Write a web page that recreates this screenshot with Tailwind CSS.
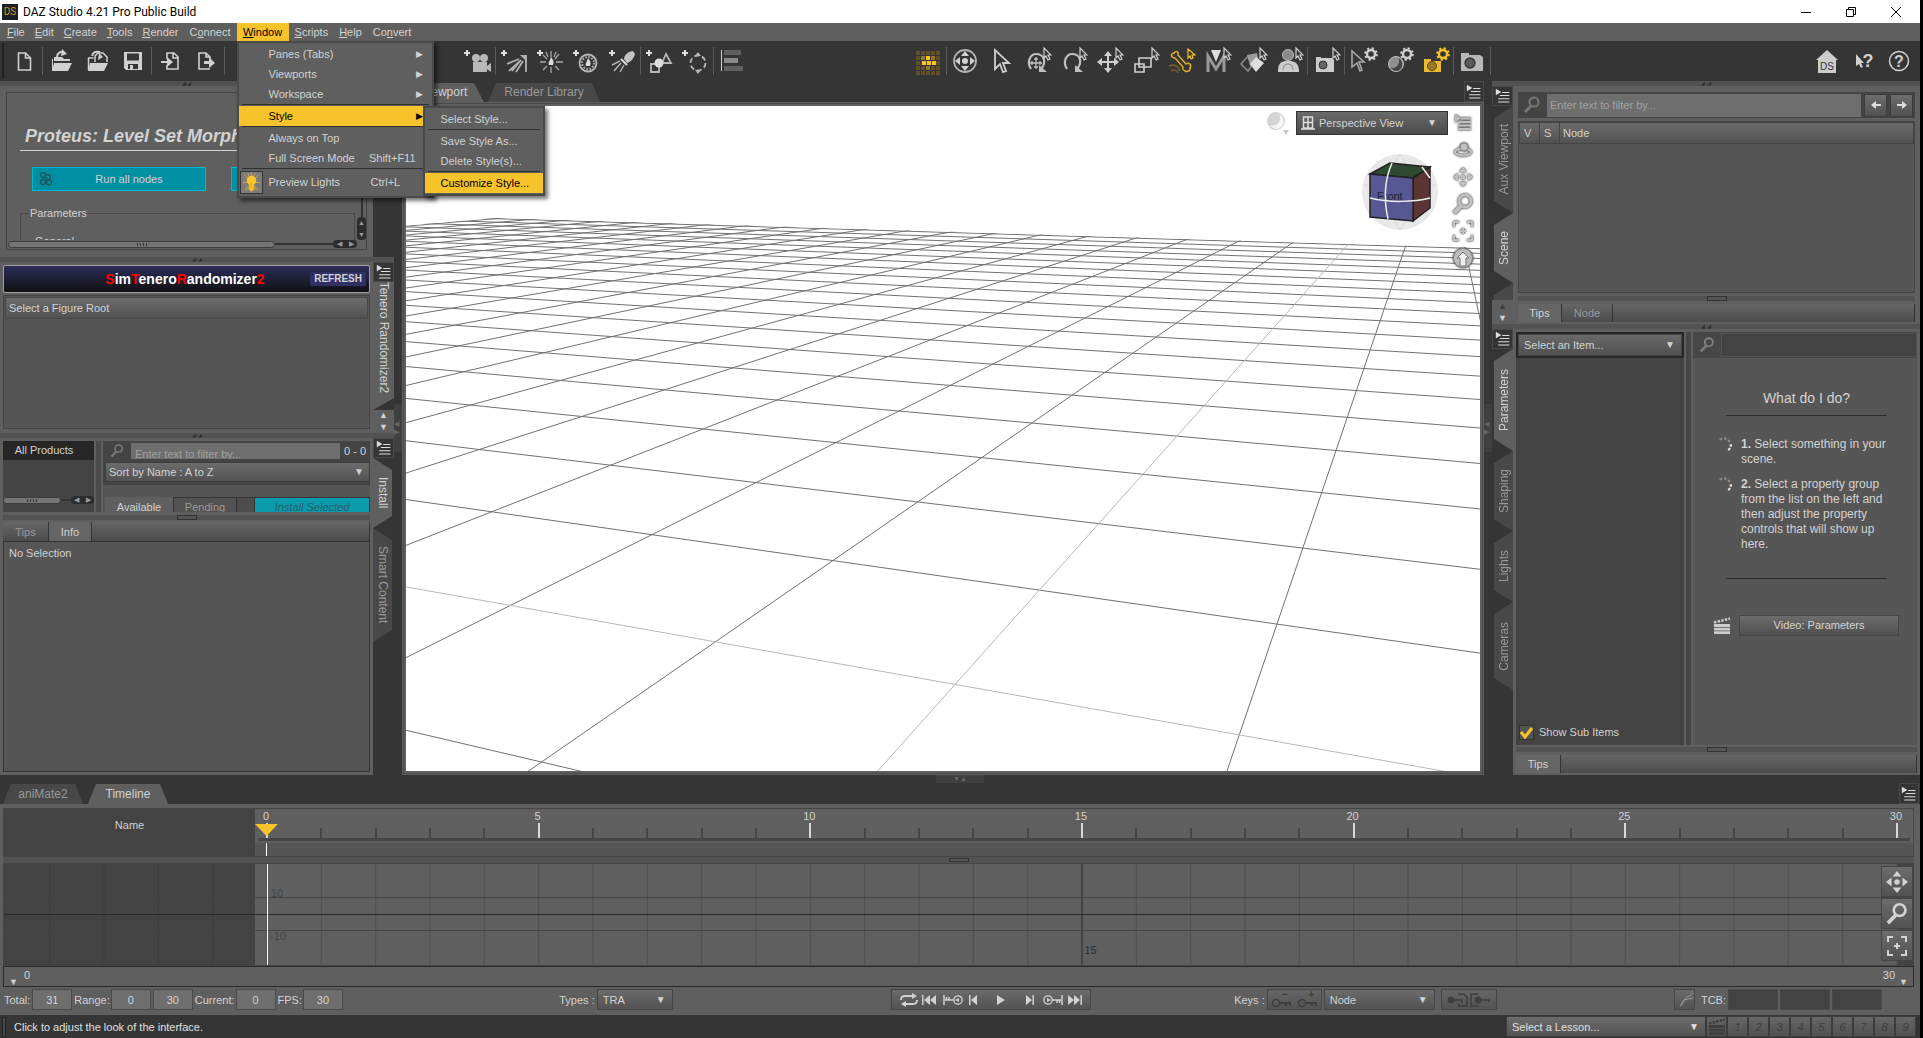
<!DOCTYPE html>
<html lang="en">
<head>
<meta charset="utf-8">
<title>DAZ Studio 4.21 Pro Public Build</title>
<script src="https://cdn.jsdelivr.net/npm/@tailwindcss/browser@4"></script>
</head>
<body class="bg-black pr-[3px] font-['Liberation_Sans',Arial,sans-serif] text-[11px] leading-4 text-[#d2d2d2]">

<!-- icon sprite -->
<svg class="hidden">
  <symbol id="cur" viewBox="0 0 30 30"><path d="M22 2v10l2-2 2 4 2-1-2-4h3z" fill="#343534" stroke="#d0d0d0" stroke-width="1.2"/></symbol>
  <symbol id="gear" viewBox="0 0 30 30"><circle cx="23" cy="8" r="4" fill="none" stroke="currentColor" stroke-width="2.4"/><circle cx="23" cy="8" r="5.8" fill="none" stroke="currentColor" stroke-width="2" stroke-dasharray="2.2 2.35"/></symbol>
  <symbol id="plus" viewBox="0 0 30 30"><path d="M2 7h6M5 4v6" stroke="#e0e0e0" stroke-width="2"/></symbol>
  <symbol id="new" viewBox="0 0 30 30"><path d="M9.500 7h7l5 5v12h-12zM16.500 7v5h5" fill="none" stroke="currentColor" stroke-width="1.6"/></symbol>
  <symbol id="open" viewBox="0 0 30 30"><path d="M6 15h18v-2h-6l-2-2H8v4zM8 17h18l-4 8H6z" fill="currentColor"/><path d="M6.500 24V13" stroke="currentColor"/><path d="M11 11c0-4 4-6 7-5" fill="none" stroke="currentColor" stroke-width="2"/><path d="M16 3l5 5-6 2z" fill="currentColor"/></symbol>
  <symbol id="recent" viewBox="0 0 30 30"><path d="M8 17h18l-4 8H6z" fill="currentColor"/><path d="M6.500 24V12h5M13 16v-6l3-3h5l4 4v5" fill="none" stroke="currentColor" stroke-width="1.500"/><path d="M10 10c1-4 4-5 8-4" fill="none" stroke="currentColor" stroke-width="2"/><path d="M17 7l4 4-5 3z" fill="currentColor"/></symbol>
  <symbol id="save" viewBox="0 0 30 30"><path fill-rule="evenodd" d="M6 6h18v18H8l-2-2zM9 7.500v7h12v-7zM10 18v5h10v-5z" fill="currentColor"/><path d="M12 19h3v4h-3z" fill="currentColor"/></symbol>
  <symbol id="import" viewBox="0 0 30 30"><path d="M12 13V7h7l4 4v12H12v-4M18 7v5h5" fill="none" stroke="currentColor" stroke-width="1.600"/><path d="M6 15h6v-4l6 5-6 5v-4H6z" fill="currentColor"/></symbol>
  <symbol id="export" viewBox="0 0 30 30"><path d="M18 22v1H8V7h7l4 4v3M15 7v4h4" fill="none" stroke="currentColor" stroke-width="1.600"/><path d="M13 15h5v-4l6 6-6 5v-4h-5z" fill="currentColor"/></symbol>
  <symbol id="video" viewBox="0 0 30 30"><g fill="#b8b8b8"><circle cx="14" cy="12" r="4"/><circle cx="22" cy="12" r="4"/><path d="M11 16h14v10H11zM25 20l4-3v9l-4-3z"/></g><use href="#plus"/></symbol>
  <symbol id="dlight" viewBox="0 0 30 30"><g stroke="#b0b0b0" stroke-width="1.800"><path d="M20 13L8 18M21 15L10 25M24 15l-7 11M27 14v12M22 14l-9 11"/></g><path d="M21 9h7v7z" fill="#b0b0b0"/><use href="#plus"/></symbol>
  <symbol id="plight" viewBox="0 0 30 30"><g stroke="#a8a8a8" stroke-width="1.300"><path d="M16 5v6M16 21v6M5 16h6M21 16h7M8 9l4 4M24 8l-4 5M8 24l4-4M24 24l-4-4M11 6l2 5M21 6l-2 5"/></g><path d="M16 11c3 4 3 5 2 8h-4c-1-3 1-4 2-8z" fill="#ddd"/><use href="#plus"/></symbol>
  <symbol id="llight" viewBox="0 0 30 30"><circle cx="17" cy="17" r="8.500" fill="none" stroke="#b8b8b8" stroke-width="1.800"/><circle cx="17" cy="17" r="6" fill="none" stroke="#b8b8b8" stroke-width="2" stroke-dasharray="1.500 1.600"/><path d="M17 12c3 4 3 5 2 8h-4c-1-3 1-4 2-8z" fill="#ddd"/><use href="#plus"/></symbol>
  <symbol id="slight" viewBox="0 0 30 30"><path d="M17 13c0-4 5-8 9-8l2 3c-1 4-4 8-8 9z" fill="#c4c4c4"/><path d="M14 13l6 6" stroke="#ddd" stroke-width="2"/><path d="M13 15l-8 4M14 17l-7 8M17 19l-4 7" stroke="#b0b0b0" stroke-width="1.500"/><use href="#plus"/></symbol>
  <symbol id="prim" viewBox="0 0 30 30"><path d="M7 18h8v8H7zM22 8l5 9h-9z" fill="#343534" stroke="#b8b8b8" stroke-width="1.800"/><circle cx="15" cy="17" r="4.500" fill="#ddd"/><use href="#plus"/></symbol>
  <symbol id="group" viewBox="0 0 30 30"><circle cx="18" cy="17" r="7.500" fill="none" stroke="#b8b8b8" stroke-width="1.800" stroke-dasharray="5 2.850"/><path d="M18 6l3 4h-6zM18 28l3-4h-6z" fill="#b8b8b8"/><use href="#plus"/></symbol>
  <symbol id="align" viewBox="0 0 30 30"><path d="M4.500 4v21" stroke="#d0d0d0"/><path d="M7 4h17v5H7zM7 20h19v5H7z" fill="#606060"/><path d="M7 12h14v5H7z" fill="#8a8a8a"/></symbol>
  <symbol id="wall" viewBox="0 0 30 30"><g fill="none" stroke="#5f5026" stroke-width="4" stroke-dasharray="4 1"><path d="M3 7h24M3 12h24M3 17h24M3 22h24M3 27h24"/></g><path d="M8 10h4v4H8zM18 10h4v4h-4zM13 20h4v4h-4z" fill="#947427"/><path d="M13 10h4v4h-4zM9 15h4v4H9zM14 15h4v4h-4zM19 15h4v4h-4z" fill="#f7c32b"/></symbol>
  <symbol id="aim" viewBox="0 0 30 30"><circle cx="15" cy="15" r="11" fill="none" stroke="#b0b0b0" stroke-width="1.800"/><path d="M15 5l4 5h-8zM15 25l4-5h-8zM5 15l5-4v8zM25 15l-5-4v8z" fill="#d0d0d0"/><circle cx="15" cy="15" r="3" fill="#d0d0d0"/></symbol>
  <symbol id="arrow" viewBox="0 0 30 30"><path d="M9 4v19l5-5 3 8 3-1-3-8h6z" fill="none" stroke="#d0d0d0" stroke-width="1.800"/></symbol>
  <symbol id="rot" viewBox="0 0 30 30"><path d="M9 23c-5-8 0-15 5-15 8 0 11 8 5 15" fill="none" stroke="#c0c0c0" stroke-width="2.200"/><path d="M17 19v7h8z" fill="#c0c0c0"/><use href="#cur"/></symbol>
  <symbol id="uni" viewBox="0 0 30 30"><use href="#rot"/><path d="M14 11v12M8 17h12M12 13h4M12 21h4M10 15v4M18 15v4" stroke="#c0c0c0" stroke-width="1.300"/></symbol>
  <symbol id="move" viewBox="0 0 30 30"><path d="M14 9v14M7 16h14" stroke="#d0d0d0" stroke-width="2"/><path d="M14 5l4 5h-8zM14 27l4-5h-8zM3 16l5-4v8zM25 16l-5-4v8z" fill="#d0d0d0"/><use href="#cur"/></symbol>
  <symbol id="scale" viewBox="0 0 30 30"><path d="M9 12h12v9H9zM5 18h9v8H5z" fill="none" stroke="#d0d0d0" stroke-width="1.600"/><use href="#cur"/></symbol>
  <symbol id="bone" viewBox="0 0 30 30"><path d="M8 7c2-3 5-1 4 2l8 9c3-2 6 1 4 4 1 3-3 4-5 3-2-1-3-3-2-4l-8-9c-4 0-5-4-1-5z" fill="none" stroke="#dda92a" stroke-width="1.500"/><path d="M3 20c5-2 9 0 11 5M5 25c3-2 6-1 7 2" fill="none" stroke="#7d6224" stroke-width="1.500"/><path d="M22 3v9l2-2 1 3 2-1-1-3h3z" fill="none" stroke="#f7c32b" stroke-width="1.200"/></symbol>
  <symbol id="morph" viewBox="0 0 30 30"><path d="M6 26V10l8 13 8-13v16" fill="none" stroke="#999" stroke-width="3"/><path d="M9 4h10l-5 12z" fill="#ddd"/><use href="#cur"/></symbol>
  <symbol id="surf" viewBox="0 0 30 30"><path d="M3 18l7-8 5 8-5 7z" fill="none" stroke="#888" stroke-width="1.500"/><path d="M9 9l10-2 2 10-9 3z" fill="#9a9a9a"/><path d="M18 11l8 6-8 9-6-8z" fill="#ddd"/><use href="#cur"/></symbol>
  <symbol id="fig" viewBox="0 0 30 30"><path d="M4 26c0-8 2-10 7-11h6c5 1 8 3 8 11z" fill="#ccc"/><circle cx="14" cy="9" r="5.500" fill="#8a8a8a" stroke="#bbb"/><path d="M9 24c0-8 10-8 10 0" fill="none" stroke="#999" stroke-width="1.500"/><use href="#cur"/></symbol>
  <symbol id="cam" viewBox="0 0 30 30"><path d="M4 7h8v2h11l3 2v14H4z" fill="currentColor"/><circle cx="13" cy="17" r="5" fill="#5a5a5a" stroke="#333" stroke-width="1.300"/></symbol>
  <symbol id="camcur" viewBox="0 0 30 30"><path d="M5 11h5v1h11l2 2v12H5z" fill="#ccc"/><circle cx="12" cy="19" r="4" fill="#666" stroke="#333"/><use href="#cur"/></symbol>
  <symbol id="agear" viewBox="0 0 30 30"><path d="M4 5v16l5-4 3 8 2-1-3-8h5z" fill="none" stroke="#a8a8a8" stroke-width="1.600"/><use href="#gear"/></symbol>
  <symbol id="bgear" viewBox="0 0 30 30"><circle cx="12" cy="18" r="7.500" fill="#8f8f8f" stroke="#c0c0c0"/><path d="M6 22c7 1 10-4 9-10 6 5 3 14-4 13z" fill="#444"/><use href="#gear"/></symbol>
  <symbol id="cgear" viewBox="0 0 30 30"><path d="M4 13h7v2h10v11H4z" fill="#e9b92f"/><circle cx="12" cy="20" r="4.500" fill="#9a7a25" stroke="#5a4613"/><use href="#gear"/></symbol>
  <symbol id="home" viewBox="0 0 30 30"><path d="M15 4l11 10h-2v13H6V14H4z" fill="#ccc"/><text x="15" y="24" text-anchor="middle" font-size="10" fill="#343534">DS</text></symbol>
  <symbol id="whats" viewBox="0 0 30 30"><path d="M8 8v12l3-2 2 4 2-1-2-4h3z" fill="#d0d0d0"/><text x="20" y="21" text-anchor="middle" font-size="18" font-weight="bold" fill="#d0d0d0">?</text></symbol>
  <symbol id="help" viewBox="0 0 30 30"><circle cx="15" cy="15" r="9.500" fill="none" stroke="#d0d0d0" stroke-width="1.500"/><text x="15" y="21" text-anchor="middle" font-size="16" font-weight="bold" fill="#d0d0d0">?</text></symbol>
  <symbol id="pmenu" viewBox="0 0 20 20"><path d="M1 1v8l7-4z" fill="#ddd"/><path d="M9 5.500h9M6 9.500h12M4 13.500h14M4 17.500h14" stroke="#ddd" stroke-width="1.300"/></symbol>
  <symbol id="mag" viewBox="0 0 20 20"><circle cx="12" cy="7" r="4.500" fill="none" stroke="currentColor" stroke-width="2"/><path d="M9 11l-6 6" stroke="currentColor" stroke-width="2.800"/></symbol>
  <symbol id="pan" viewBox="0 0 20 20"><g fill="currentColor"><path d="M10 0l4 5h-8zM10 20l4-5h-8zM0 10l5-4v8zM20 10l-5-4v8z"/><circle cx="10" cy="10" r="2.500"/></g></symbol>
  <symbol id="frame" viewBox="0 0 20 20"><path d="M1 6V1h5M14 1h5v5M19 14v5h-5M6 19H1v-5M10 7v6M7 10h6" fill="none" stroke="currentColor" stroke-width="2"/></symbol>
  <symbol id="clap" viewBox="0 0 18 18"><path d="M1 7h16v3H1zM1 10.800h16v2.700H1zM1 14.300h16V17H1z" fill="currentColor"/><path d="M1 5.500l16-4" stroke="currentColor" stroke-width="2.500" stroke-dasharray="2.500 1.200"/></symbol>
  <symbol id="spin" viewBox="0 0 18 18"><path d="M3 3C7 0 13 2 15 7" fill="none" stroke="#888" stroke-width="2.600" stroke-dasharray="3 2"/><path d="M15.500 8A7 7 0 0 1 12 15" fill="none" stroke="#ddd" stroke-width="2.600" stroke-dasharray="3 1.500"/></symbol>
  <symbol id="key" viewBox="0 0 20 12"><circle cx="5" cy="7" r="3.500" fill="none" stroke="currentColor" stroke-width="1.500"/><path d="M8 7h11v3M15 7v3" fill="none" stroke="currentColor" stroke-width="1.800"/></symbol>
  <symbol id="nextkey" viewBox="0 0 20 12"><circle cx="5" cy="6" r="4.200" fill="none" stroke="currentColor" stroke-width="1.300"/><path d="M4 4l4 2-4 2z" fill="currentColor"/><path d="M9 6h9M14 6v3M16.500 6v3M19 1v10" fill="none" stroke="currentColor" stroke-width="1.500"/></symbol>
</svg>

<div class="flex h-screen flex-col overflow-hidden bg-[#343534]">

  <!-- title bar -->
  <header class="flex h-[23px] shrink-0 items-center bg-white px-[2px] font-[Roboto,sans-serif] text-[12px] text-black">
    <span class="flex h-4 w-4 items-center justify-center bg-[#1c2026] text-[10px] leading-4 text-[#c49a2a]">DS</span>
    <h1 class="ml-[5px]">DAZ Studio 4.21 Pro Public Build</h1>
    <div class="ml-auto flex items-center">
      <button aria-label="Minimize" class="flex w-[45px] justify-center"><svg class="size-3" viewBox="0 0 12 12"><path d="M1 6.500h10" stroke="#000"/></svg></button>
      <button aria-label="Restore" class="flex w-[45px] justify-center"><svg class="size-3" viewBox="0 0 12 12"><path d="M1.500 3.500h7v7h-7zM3.500 3.500v-2h7v7h-2" fill="none" stroke="#000"/></svg></button>
      <button aria-label="Close" class="flex w-[45px] justify-center"><svg class="size-3" viewBox="0 0 12 12"><path d="M1 1l10 10M11 1L1 11" stroke="#000"/></svg></button>
    </div>
  </header>

  <!-- menu bar -->
  <nav class="relative z-20 flex h-[18px] shrink-0 bg-[#5f5f5f] pl-1 leading-[18px]">
    <button class="pr-[5px] pl-[3px]"><u>F</u>ile</button>
    <button class="px-[5px]"><u>E</u>dit</button>
    <button class="px-[5px]"><u>C</u>reate</button>
    <button class="px-[5px]"><u>T</u>ools</button>
    <button class="px-[5px]"><u>R</u>ender</button>
    <button class="px-[6px]">C<u>o</u>nnect</button>
    <div class="relative">
      <button class="w-[52px] bg-[#f7c32b] text-black"><u>W</u>indow</button>
      <div class="absolute top-[18px] left-0 w-[197px] border-2 border-[#4a4a4a] bg-[#5f5f5f] py-[1px] text-left leading-5 shadow-[3px_3px_4px_#0008]">
        <button class="flex h-5 w-full items-center pl-[30px] pr-[9px]">Panes (Tabs)<span class="ml-auto text-[9px]">&#9654;</span></button>
        <button class="flex h-5 w-full items-center pl-[30px] pr-[9px]">Viewports<span class="ml-auto text-[9px]">&#9654;</span></button>
        <button class="flex h-5 w-full items-center pl-[30px] pr-[9px]">Workspace<span class="ml-auto text-[9px]">&#9654;</span></button>
        <hr class="mx-[3px] mb-px border-[#303030]">
        <button class="flex h-5 w-full items-center bg-[#f7c32b] pl-[30px] pr-[9px] text-black">Style<span class="ml-auto text-[9px]">&#9654;</span></button>
        <hr class="mx-[3px] mb-px border-[#303030]">
        <button class="flex h-5 w-full items-center pl-[30px]">Always on Top</button>
        <button class="flex h-5 w-full items-center pl-[30px] pr-4">Full Screen Mode<span class="ml-auto">Shift+F11</span></button>
        <hr class="mx-[3px] border-[#303030]">
        <button class="flex h-[26px] w-full items-center gap-[6px] pl-[1px]">
          <svg class="size-[23px] border border-[#333] bg-[#7c7c7c]" viewBox="0 0 22 22"><path d="M4 3l14 16M18 3L4 19M2 11h18M11 0v10M7 1l8 18M15 1L7 19" stroke="#d3a42a"/><circle cx="11" cy="9" r="5" fill="#f9c62c"/><path d="M8.500 12h5v6l-2.500 3-2.500-3z" fill="#f0b92a"/></svg>
          Preview Lights<span class="ml-auto w-[61px] text-left">Ctrl+L</span></button>
        <!-- style submenu -->
        <div class="absolute top-[63px] left-[184px] w-[122px] border-2 border-[#4a4a4a] bg-[#5f5f5f] py-[1px] shadow-[3px_3px_4px_#0008]">
          <button class="flex h-5 w-full items-center pl-4">Select Style...</button>
          <hr class="mx-[3px] mb-px border-[#303030]">
          <button class="flex h-5 w-full items-center pl-4">Save Style As...</button>
          <button class="flex h-5 w-full items-center pl-4">Delete Style(s)...</button>
          <hr class="mx-[3px] mb-px border-[#303030]">
          <button class="flex h-5 w-full items-center bg-[#f7c32b] pl-4 text-black">Customize Style...</button>
        </div>
      </div>
    </div>
    <button class="px-[6px]"><u>S</u>cripts</button>
    <button class="px-[5px]"><u>H</u>elp</button>
    <button class="px-[6px]">Co<u>n</u>vert</button>
  </nav>

  <!-- toolbar -->
  <div class="flex h-10 shrink-0 items-center pr-[3px] text-[#d0d0d0]">
    <span class="mx-[2px] h-9 w-[2px] bg-[#222]"></span>
    <button class="flex w-9 justify-center" aria-label="New"><svg class="size-[30px]"><use href="#new"/></svg></button>
    <span class="h-7 w-px bg-[#5a5a5a]"></span>
    <button class="flex w-9 justify-center" aria-label="Open"><svg class="size-[30px]"><use href="#open"/></svg></button>
    <button class="flex w-9 justify-center" aria-label="Open Recent"><svg class="size-[30px]"><use href="#recent"/></svg></button>
    <button class="flex w-9 justify-center" aria-label="Save"><svg class="size-[30px]"><use href="#save"/></svg></button>
    <span class="h-7 w-px bg-[#5a5a5a]"></span>
    <button class="flex w-9 justify-center" aria-label="Import"><svg class="size-[30px]"><use href="#import"/></svg></button>
    <button class="flex w-9 justify-center" aria-label="Export"><svg class="size-[30px]"><use href="#export"/></svg></button>
    <span class="h-7 w-px bg-[#5a5a5a]"></span>
    <button class="ml-[234px] flex w-9 justify-center" aria-label="New Camera"><svg class="size-[30px]"><use href="#video"/></svg></button>
    <span class="h-7 w-px bg-[#5a5a5a]"></span>
    <button class="flex w-9 justify-center" aria-label="Distant Light"><svg class="size-[30px]"><use href="#dlight"/></svg></button>
    <button class="flex w-9 justify-center" aria-label="Point Light"><svg class="size-[30px]"><use href="#plight"/></svg></button>
    <button class="flex w-9 justify-center" aria-label="Linear Light"><svg class="size-[30px]"><use href="#llight"/></svg></button>
    <button class="flex w-9 justify-center" aria-label="Spotlight"><svg class="size-[30px]"><use href="#slight"/></svg></button>
    <span class="h-7 w-px bg-[#5a5a5a]"></span>
    <button class="flex w-9 justify-center" aria-label="New Primitive"><svg class="size-[30px]"><use href="#prim"/></svg></button>
    <button class="flex w-9 justify-center" aria-label="New Group"><svg class="size-[30px]"><use href="#group"/></svg></button>
    <span class="h-7 w-px bg-[#5a5a5a]"></span>
    <button class="flex w-9 justify-center" aria-label="Align"><svg class="size-[30px]"><use href="#align"/></svg></button>
    <button class="ml-40 flex w-9 justify-center" aria-label="Wall"><svg class="size-[30px]"><use href="#wall"/></svg></button>
    <span class="h-7 w-px bg-[#5a5a5a]"></span>
    <button class="flex w-9 justify-center" aria-label="Aim"><svg class="size-[30px]"><use href="#aim"/></svg></button>
    <button class="flex w-9 justify-center" aria-label="Node Selection"><svg class="size-[30px]"><use href="#arrow"/></svg></button>
    <button class="flex w-9 justify-center" aria-label="Universal"><svg class="size-[30px]"><use href="#uni"/></svg></button>
    <button class="flex w-9 justify-center" aria-label="Rotate"><svg class="size-[30px]"><use href="#rot"/></svg></button>
    <button class="flex w-9 justify-center" aria-label="Translate"><svg class="size-[30px]"><use href="#move"/></svg></button>
    <button class="flex w-9 justify-center" aria-label="Scale"><svg class="size-[30px]"><use href="#scale"/></svg></button>
    <button class="flex w-9 justify-center" aria-label="Joint Editor"><svg class="size-[30px]"><use href="#bone"/></svg></button>
    <button class="flex w-9 justify-center" aria-label="Morph"><svg class="size-[30px]"><use href="#morph"/></svg></button>
    <button class="flex w-9 justify-center" aria-label="Surface"><svg class="size-[30px]"><use href="#surf"/></svg></button>
    <button class="flex w-9 justify-center" aria-label="Figure"><svg class="size-[30px]"><use href="#fig"/></svg></button>
    <span class="h-7 w-px bg-[#5a5a5a]"></span>
    <button class="flex w-9 justify-center" aria-label="Spot Render"><svg class="size-[30px]"><use href="#camcur"/></svg></button>
    <span class="h-7 w-px bg-[#5a5a5a]"></span>
    <button class="flex w-9 justify-center" aria-label="Tool Settings"><svg class="size-[30px]"><use href="#agear"/></svg></button>
    <button class="flex w-9 justify-center" aria-label="Draw Settings"><svg class="size-[30px]"><use href="#bgear"/></svg></button>
    <button class="flex w-9 justify-center text-[#f7c32b]" aria-label="Render Settings"><svg class="size-[30px]"><use href="#cgear"/></svg></button>
    <span class="h-7 w-px bg-[#5a5a5a]"></span>
    <button class="flex w-9 justify-center text-[#b8b8b8]" aria-label="Render"><svg class="size-[30px]"><use href="#cam"/></svg></button>
    <span class="h-7 w-px bg-[#5a5a5a]"></span>
    <button class="ml-auto flex w-9 justify-center" aria-label="Home"><svg class="size-[30px]"><use href="#home"/></svg></button>
    <button class="flex w-9 justify-center" aria-label="What's This"><svg class="size-[30px]"><use href="#whats"/></svg></button>
    <button class="flex w-9 justify-center" aria-label="Help"><svg class="size-[30px]"><use href="#help"/></svg></button>
  </div>

  <main class="flex min-h-0 flex-1">

    <!-- left dock -->
    <aside class="flex w-[394px] shrink-0 flex-col">
      <section class="flex h-[176px] shrink-0">
        <div class="flex w-[373px] flex-col bg-[#5f5f5f]">
          <div class="flex h-[5px] justify-center bg-[#525252] text-[5px] leading-[5px] text-[#2c2c2c]">&#9698; &#9698;</div>
          <div class="mx-[6px] mt-[6px] flex h-[158px] flex-col border border-[#444]">
            <div class="flex h-[147px] overflow-hidden">
              <div class="flex-1 pl-[13px] pr-[2px]">
                <h2 class="mt-[33px] border-b border-[#d2d2d2] pb-[4px] pl-[5px] text-[18px] leading-5 font-bold whitespace-nowrap italic">Proteus: Level Set Morph</h2>
                <div class="mt-4 ml-3 flex gap-[25px]">
                  <button class="relative h-6 w-[174px] shrink-0 border border-[#00b9d1] bg-[#0090a4] pl-5"><svg class="absolute top-1 left-[6px] h-[14px] w-[14px]" viewBox="0 0 14 14"><g fill="none" stroke="#23545c" stroke-width="1.300"><circle cx="4" cy="3" r="2.500"/><circle cx="9" cy="5" r="2.500"/><circle cx="4" cy="10" r="2.500"/><circle cx="10" cy="10.500" r="2.500"/></g></svg>Run all nodes</button>
                  <button class="h-6 w-[100px] shrink-0 border border-[#00b9d1] bg-[#0090a4]" aria-label="Reset"></button>
                </div>
                <fieldset class="mt-[14px] h-20 border border-[#494949] px-2"><legend class="px-[1px]">Parameters</legend><p class="mt-3 ml-[6px]">General</p></fieldset>
              </div>
              <div class="flex w-[9px] flex-col items-center justify-end bg-[#5f5f5f]"><span class="w-[2px] flex-1 bg-[#333]"></span><span class="flex h-[23px] w-[9px] flex-col items-center justify-between rounded bg-[#2c2c2f] text-[7px] leading-[11px] text-[#999]"><i class="not-italic">&#9650;</i><i class="not-italic">&#9660;</i></span></div>
            </div>
            <div class="flex h-2 items-center px-[1px]"><span class="flex h-[7px] w-[267px] shrink-0 items-center justify-center gap-[2px] rounded border border-[#3c3c3c] bg-[#757575]"><i class="h-[3px] w-1 border-x border-[#333]"></i><i class="h-[3px] w-1 border-x border-[#333]"></i></span><span class="h-[2px] flex-1 bg-[#333]"></span><span class="mr-2 flex h-2 w-6 items-center justify-around rounded bg-[#2c2c2f] text-[7px] text-[#999]"><i class="not-italic">&#9664;</i><i class="not-italic">&#9654;</i></span></div>
          </div>
        </div>
      </section>

      <section class="flex h-[176px] shrink-0 flex-col">
        <div class="flex h-[5px] shrink-0 justify-center bg-[#525252] text-[5px] leading-[5px] text-[#2c2c2c]">&#9698; &#9698;</div>
        <div class="flex flex-1">
          <div class="flex w-[373px] flex-col gap-[2px] bg-[#5f5f5f] px-[3px] pt-[3px] pb-1">
            <div class="grid h-7 grid-cols-[1fr_auto_1fr] items-center rounded-[2px] border border-[#a0a0a0] bg-linear-to-b from-[#2c2c5c] to-[#111] pr-[3px]">
              <b class="col-start-2 text-[14px] text-white"><span class="text-[#f00]">S</span>im<span class="text-[#f00]">T</span>enero<span class="text-[#f00]">R</span>andomizer<span class="text-[#f00]">2</span></b>
              <button class="justify-self-end rounded-[2px] bg-[#303064] px-1 text-[10px] leading-[14px] font-bold">REFRESH</button>
            </div>
            <div class="flex-1 border border-[#444] bg-[#565656] p-[1px]">
              <div class="h-[22px] border border-[#484848] bg-linear-to-b from-[#6c6c6c] to-[#525252] pl-[3px] leading-5">Select a Figure Root</div>
            </div>
          </div>
          <div class="flex w-[21px] flex-col">
            <button aria-label="Pane menu" class="flex h-5 items-center justify-center border border-[#484848]"><svg class="size-4"><use href="#pmenu"/></svg></button>
            <div class="flex min-h-0 flex-1 basis-0 justify-center overflow-hidden bg-[#5f5f5f] [clip-path:polygon(0_0,100%_0,100%_calc(100%_-_12px),0_100%)]"><span class="self-end pb-[17px] text-[12px] whitespace-nowrap [writing-mode:vertical-rl]">SimTenero Randomizer2</span></div>
            <div class="flex h-[23px] flex-col items-center justify-around bg-[#5f5f5f] text-[9px] leading-[11px]"><i class="not-italic">&#9650;</i><i class="not-italic">&#9660;</i></div>
          </div>
        </div>
      </section>

      <section class="flex min-h-0 flex-1 flex-col">
        <div class="flex h-[5px] shrink-0 justify-center bg-[#525252] text-[5px] leading-[5px] text-[#2c2c2c]">&#9698; &#9698;</div>
        <div class="flex min-h-0 flex-1">
          <div class="flex w-[373px] flex-col bg-[#5f5f5f] px-[3px] pt-[3px] pb-[3px]">
            <div class="flex h-[71px] shrink-0 gap-[2px]">
              <div class="flex w-[91px] flex-col bg-[#444]">
                <div class="h-[19px] bg-[#262626] pr-[9px] text-center leading-[19px]">All Products</div>
                <div class="mt-auto mb-2 flex items-center"><span class="flex h-[7px] w-[58px] shrink-0 items-center justify-center gap-[2px] rounded border border-[#3c3c3c] bg-[#757575]"><i class="h-[3px] w-1 border-x border-[#333]"></i><i class="h-[3px] w-1 border-x border-[#333]"></i></span><span class="h-[2px] flex-1 bg-[#333]"></span><span class="flex h-2 w-[23px] items-center justify-around rounded bg-[#2c2c2f] text-[7px] text-[#999]"><i class="not-italic">&#9664;</i><i class="not-italic">&#9654;</i></span></div>
              </div>
              <div class="w-[5px] bg-[#4a4a4a]"></div>
              <div class="flex flex-1 flex-col overflow-hidden bg-[#565656]">
                <div class="bg-[#444] pb-[3px]">
                  <div class="flex h-[18px] items-end pr-1">
                    <svg class="mx-[6px] size-4 text-[#777]"><use href="#mag"/></svg>
                    <input aria-label="Filter products" placeholder="Enter text to filter by..." class="h-4 min-w-0 flex-1 bg-[#6e6e6e] px-1 pt-[5px] placeholder:text-[#a0a0a0]">
                    <span class="pl-1">0 - 0</span>
                  </div>
                  <div class="relative mt-[3px] ml-[2px]">
                    <select aria-label="Sort" class="h-5 w-full appearance-none border border-[#3d3d3d] bg-linear-to-b from-[#6c6c6c] to-[#525252] px-[3px]"><option>Sort by Name : A to Z</option></select>
                    <span class="pointer-events-none absolute top-[2px] right-[6px] text-[10px]">&#9660;</span>
                  </div>
                </div>
                <div class="mt-3 flex h-[15px] pl-[2px]">
                  <button class="h-5 w-[68px] bg-[#5f5f5f]">Available</button>
                  <button class="h-5 w-16 border border-[#333] bg-[#525252] text-[#999]">Pending</button>
                  <span class="h-5 flex-1 border-y border-[#333] bg-[#4d4d4d]"></span>
                  <button class="h-5 w-[116px] border border-[#333] bg-[#0c9bad] text-[#25606a] italic">Install Selected</button>
                </div>
              </div>
            </div>
            <div class="mt-[3px] mb-[2px] flex h-[5px] shrink-0 justify-center bg-[#525252]"><span class="w-5 border border-[#333] bg-[#555]"></span></div>
            <div class="flex h-[19px] shrink-0 border-r border-[#333] bg-linear-to-b from-[#666] to-[#4c4c4c] leading-[18px]">
              <button class="w-[46px] border-r border-[#333] text-[#999]">Tips</button>
              <button class="w-[43px] border-r border-[#333] bg-[#656565]">Info</button>
            </div>
            <div class="flex-1 border border-[#333] bg-[#565656] px-[5px] py-[3px]">No Selection</div>
          </div>
          <div class="flex w-[21px] flex-col text-[12px]">
            <button aria-label="Pane menu" class="flex h-5 items-center justify-center border border-[#484848]"><svg class="size-4"><use href="#pmenu"/></svg></button>
            <button class="flex h-[70px] w-[19px] items-center justify-center bg-[#5f5f5f] [clip-path:polygon(0_0,100%_12px,100%_calc(100%_-_12px),0_100%)]"><span class="[writing-mode:vertical-rl]">Install</span></button>
            <button class="flex h-[114px] w-[19px] items-center justify-center bg-[#484848] text-[#999] [clip-path:polygon(0_0,100%_12px,100%_calc(100%_-_12px),0_100%)]"><span class="[writing-mode:vertical-rl]">Smart Content</span></button>
          </div>
        </div>
      </section>
    </aside>

    <div class="flex w-2 shrink-0 items-center"><div class="flex h-12 w-2 flex-col justify-center bg-[#404040] text-[7px] leading-2 text-[#666]"><i class="not-italic">&#9664;</i><i class="not-italic">&#9654;</i></div></div>

    <!-- viewport -->
    <section class="flex min-w-0 flex-1 flex-col">
      <div class="flex h-[21px] items-end text-[12px]">
        <button class="h-[19px] w-[82px] bg-[#5f5f5f] pl-[2px] leading-[19px] [clip-path:polygon(8px_0,calc(100%_-_10px)_0,100%_100%,0_100%)]">Viewport</button>
        <button class="ml-1 h-[19px] w-28 bg-[#484848] leading-[19px] text-[#999] [clip-path:polygon(8px_0,calc(100%_-_8px)_0,100%_100%,0_100%)]">Render Library</button>
        <button aria-label="Pane menu" class="ml-auto flex h-[21px] w-5 items-center justify-center border border-[#484848]"><svg class="size-4"><use href="#pmenu"/></svg></button>
      </div>
      <div class="min-h-0 flex-1 border-2 border-[#5f5f5f] bg-[#5f5f5f] p-[2px] outline outline-offset-[-2px] outline-[#4a4a4a]">
        <div class="relative h-full overflow-hidden bg-white">
          <svg class="h-full w-full" viewBox="9 -223 1545 1764" preserveAspectRatio="none">
            <clipPath id="floor"><path d="M8 94L138 74L1555 153V1542H8z"/></clipPath>
            <g clip-path="url(#floor)" fill="none"><path id="grid" stroke="#707070" vector-effect="non-scaling-stroke"/><path id="axes" stroke="#b8b8b8" vector-effect="non-scaling-stroke"/></g>
          </svg>
          <svg class="absolute top-[48px] right-[42px] size-[76px]" viewBox="0 0 76 76">
            <circle cx="38" cy="38" r="38" fill="#e8e8e8"/><path d="M38 0c-14 20-14 56 0 76c14-20 14-56 0-76M2 30c20 14 52 14 72 0" fill="none" stroke="#d8d8d8"/>
            <path d="M8 20L28 9l40 4-17 11z" fill="#2f4a31" stroke="#222" stroke-width="1.500"/><path d="M51 24l17-11v41L51 67z" fill="#5b3434" stroke="#222" stroke-width="1.500"/><path d="M8 20l43 4v43L8 63z" fill="#575794" stroke="#222" stroke-width="1.500"/>
            <text x="15" y="46" font-size="11" fill="#222238">Front</text>
            <path d="M30 9c-8 18-8 38-4 56M8 44c20 5 44 4 60 0M60 13l8 11" fill="none" stroke="#eee" stroke-width="1.500"/>
          </svg>
          <div class="absolute top-[5px] right-[5px] flex gap-[3px]">
            <svg class="mr-1 h-6 w-6" viewBox="0 0 24 24"><circle cx="11" cy="10" r="9" fill="#d4d4d4"/><path d="M4 15c10 0 13-6 10-12 8 5 5 15-3 15z" fill="#f4f4f4"/><path d="M18 19h6l-3 5z" fill="#c8c8c8"/></svg>
            <div class="relative h-6">
              <select aria-label="View" class="h-6 w-[152px] appearance-none border border-[#333] bg-linear-to-b from-[#6a6a6a] to-[#4c4c4c] pl-[22px]"><option>Perspective View</option></select>
              <svg class="pointer-events-none absolute top-[5px] left-[5px] size-[14px]" viewBox="0 0 14 14"><path d="M2.500 1h9v11h-9zM7 1v11M2.500 6.500h9M0 13h14" fill="none" stroke="#ddd" stroke-width="1.500"/></svg>
              <span class="pointer-events-none absolute top-1 right-[11px] text-[10px]">&#9660;</span>
            </div>
            <div class="flex w-6 flex-col items-center gap-[7px] pt-[2px] text-[#c0c0c0] drop-shadow-[0_0_1px_#000]">
              <button aria-label="View menu"><svg class="size-5" viewBox="0 0 20 20"><path d="M2 1v9l6-5z" fill="#bbb"/><path d="M8 5.500h10M6 9h12M5 12.500h13M5 16h13" stroke="#c0c0c0" stroke-width="2"/></svg></button>
              <button aria-label="Orbit"><svg class="size-5" viewBox="0 0 20 20"><ellipse cx="10" cy="12" rx="8" ry="3.500" fill="none" stroke="currentColor" stroke-width="2.500"/><circle cx="11" cy="7" r="4" fill="currentColor" stroke="#888"/></svg></button>
              <button aria-label="Pan"><svg class="size-5"><use href="#pan"/></svg></button>
              <button aria-label="Dolly"><svg class="size-5 overflow-visible" viewBox="0 0 20 20"><circle cx="12" cy="7" r="6" fill="none" stroke="currentColor" stroke-width="3"/><path d="M8 12l-7 7" stroke="currentColor" stroke-width="4"/></svg></button>
              <button aria-label="Frame"><svg class="size-5"><use href="#frame"/></svg></button>
              <button aria-label="Reset"><svg class="size-5" viewBox="0 0 20 20"><circle cx="10" cy="10" r="9.500" fill="#bcbcbc" stroke="#888"/><path d="M10 4l6 6h-3v8H7v-8H4z" fill="#eee" stroke="#777"/></svg></button>
            </div>
          </div>
        </div>
      </div>
    </section>

    <div class="flex w-2 shrink-0 items-center"><div class="flex h-12 w-2 flex-col justify-center bg-[#404040] text-[7px] leading-2 text-[#666]"><i class="not-italic">&#9664;</i><i class="not-italic">&#9654;</i></div></div>

    <!-- right dock -->
    <aside class="flex w-[428px] shrink-0 flex-col">
      <section class="flex h-[243px] shrink-0 flex-col">
        <div class="flex h-[5px] shrink-0 justify-center bg-[#525252] text-[5px] leading-[5px] text-[#2c2c2c]">&#9698; &#9698;</div>
        <div class="flex min-h-0 flex-1">
          <div class="flex w-[21px] flex-col items-end text-[12px]">
            <button aria-label="Pane menu" class="flex h-5 w-[21px] shrink-0 items-center justify-center border border-[#484848]"><svg class="size-4"><use href="#pmenu"/></svg></button>
            <button class="flex h-[107px] w-[19px] shrink-0 items-center justify-center bg-[#484848] text-[#999] [clip-path:polygon(100%_0,0_12px,0_calc(100%_-_12px),100%_100%)]"><span class="rotate-180 [writing-mode:vertical-rl]">Aux Viewport</span></button>
            <button class="flex h-[70px] w-[19px] shrink-0 items-center justify-center bg-[#5f5f5f] [clip-path:polygon(100%_0,0_12px,0_calc(100%_-_12px),100%_100%)]"><span class="rotate-180 [writing-mode:vertical-rl]">Scene</span></button>
            <span class="min-h-0 w-[19px] flex-1 bg-[#484848] [clip-path:polygon(100%_0,0_12px,0_100%,100%_100%)]"></span>
            <div class="flex h-6 w-[21px] shrink-0 flex-col items-center justify-around bg-[#5f5f5f] text-[9px] leading-[11px]"><i class="text-[#404040] not-italic">&#9650;</i><i class="not-italic">&#9660;</i></div>
          </div>
          <div class="flex flex-1 flex-col bg-[#5f5f5f] px-[5px] pt-[6px]">
            <div class="flex h-[26px] shrink-0 items-center gap-[3px] bg-[#444] px-[2px]">
              <svg class="mx-[2px] size-5 text-[#777]"><use href="#mag"/></svg>
              <input aria-label="Filter scene" placeholder="Enter text to filter by..." class="h-[23px] min-w-0 flex-1 bg-[#6e6e6e] px-[3px] placeholder:text-[#a0a0a0]">
              <button aria-label="Previous" class="flex size-[23px] items-center justify-center border border-[#3c3c3c] bg-linear-to-b from-[#6c6c6c] to-[#525252]"><svg class="size-[10px]" viewBox="0 0 10 10"><path d="M0 5l5-4v3h5v2H5v3z" fill="#ddd"/></svg></button>
              <button aria-label="Next" class="flex size-[23px] items-center justify-center border border-[#3c3c3c] bg-linear-to-b from-[#6c6c6c] to-[#525252]"><svg class="size-[10px]" viewBox="0 0 10 10"><path d="M10 5L5 1v3H0v2h5v3z" fill="#ddd"/></svg></button>
            </div>
            <div class="mt-[3px] min-h-0 flex-1 border border-[#444] bg-[#565656]">
              <table class="w-full border-collapse">
                <thead><tr class="h-[21px] bg-linear-to-b from-[#6c6c6c] to-[#505050] text-left">
                  <th class="w-5 border border-[#444] px-1 font-normal">V</th><th class="w-5 border border-[#444] px-1 font-normal">S</th><th class="border border-[#444] px-[3px] font-normal">Node</th>
                </tr></thead>
              </table>
            </div>
            <div class="my-[3px] flex h-[5px] shrink-0 justify-center bg-[#525252]"><span class="w-5 border border-[#333] bg-[#555]"></span></div>
            <div class="mb-[2px] flex h-[18px] shrink-0 border-r border-[#333] bg-linear-to-b from-[#666] to-[#4c4c4c] leading-[18px]">
              <button class="w-11 border-r border-[#333] bg-[#656565]">Tips</button>
              <button class="w-[51px] border-r border-[#333] text-[#999]">Node</button>
            </div>
          </div>
        </div>
      </section>

      <section class="flex min-h-0 flex-1 flex-col">
        <div class="flex h-[5px] shrink-0 justify-center bg-[#525252] text-[5px] leading-[5px] text-[#2c2c2c]">&#9698; &#9698;</div>
        <div class="flex min-h-0 flex-1">
          <div class="flex w-[21px] flex-col items-end text-[12px]">
            <button aria-label="Pane menu" class="flex h-5 w-[21px] items-center justify-center border border-[#484848]"><svg class="size-4"><use href="#pmenu"/></svg></button>
            <button class="flex h-[102px] w-[19px] items-center justify-center bg-[#5f5f5f] [clip-path:polygon(100%_0,0_12px,0_calc(100%_-_12px),100%_100%)]"><span class="rotate-180 [writing-mode:vertical-rl]">Parameters</span></button>
            <button class="flex h-20 w-[19px] items-center justify-center bg-[#484848] text-[#999] [clip-path:polygon(100%_0,0_12px,0_calc(100%_-_12px),100%_100%)]"><span class="rotate-180 [writing-mode:vertical-rl]">Shaping</span></button>
            <button class="flex h-[71px] w-[19px] items-center justify-center bg-[#484848] text-[#999] [clip-path:polygon(100%_0,0_12px,0_calc(100%_-_12px),100%_100%)]"><span class="rotate-180 [writing-mode:vertical-rl]">Lights</span></button>
            <button class="flex h-[88px] w-[19px] items-center justify-center bg-[#484848] text-[#999] [clip-path:polygon(100%_0,0_12px,0_calc(100%_-_12px),100%_100%)]"><span class="rotate-180 [writing-mode:vertical-rl]">Cameras</span></button>
          </div>
          <div class="flex flex-1 flex-col bg-[#5f5f5f] px-[3px] pt-[3px] pb-[2px]">
            <div class="flex min-h-0 flex-1 gap-[2px]">
              <div class="flex w-[168px] flex-col bg-[#434343]">
                <div class="relative bg-[#262626] px-[2px] py-[2px]">
                  <select aria-label="Item" class="h-[22px] w-full appearance-none border border-[#444] bg-linear-to-b from-[#6a6a6a] to-[#505050] px-[5px]"><option>Select an Item...</option></select>
                  <span class="pointer-events-none absolute top-[5px] right-[9px] text-[10px]">&#9660;</span>
                </div>
                <label class="relative mt-auto mb-[5px] ml-[3px] flex items-center gap-[5px]">
                  <input type="checkbox" checked class="size-[15px] appearance-none border border-[#333] bg-[#555]">
                  <svg class="pointer-events-none absolute left-0 size-[15px]" viewBox="0 0 15 15"><path d="M2 7l4 5 7-9" fill="none" stroke="#f7c32b" stroke-width="3"/></svg>
                  Show Sub Items
                </label>
              </div>
              <div class="w-[5px] bg-[#464646]"></div>
              <div class="flex flex-1 flex-col bg-[#565656]">
                <div class="flex h-[26px] items-center bg-[#474747]"><svg class="mx-[5px] size-[18px] text-[#808080]"><use href="#mag"/></svg><input aria-label="Filter properties" class="h-6 min-w-0 flex-1 border border-[#525252] bg-[#434343]"></div>
                <div class="pr-4 pl-4 text-[12px] leading-[15px]">
                  <h3 class="mt-[31px] mr-[14px] ml-[17px] border-b border-[#2b2b2b] pb-2 text-center text-[14px] leading-[18px]">What do I do?</h3>
                  <ol>
                    <li class="mt-[21px] flex gap-2"><svg class="ml-2 size-4 shrink-0"><use href="#spin"/></svg><p><b>1.</b> Select something in your scene.</p></li>
                    <li class="mt-[10px] flex gap-2"><svg class="ml-2 size-4 shrink-0"><use href="#spin"/></svg><p><b>2.</b> Select a property group from the list on the left and then adjust the property controls that will show up here.</p></li>
                  </ol>
                  <hr class="mt-[26px] mr-[14px] ml-[17px] border-[#2b2b2b]">
                  <div class="mt-9 flex items-center gap-2 pl-[4px]"><svg class="size-[18px] text-[#ccc]"><use href="#clap"/></svg><button class="h-[21px] w-[160px] border border-[#454545] bg-linear-to-b from-[#6c6c6c] to-[#505050] text-[11px]">Video: Parameters</button></div>
                </div>
              </div>
            </div>
            <div class="my-[2px] flex h-[5px] shrink-0 justify-center bg-[#525252]"><span class="w-5 border border-[#333] bg-[#555]"></span></div>
            <div class="mt-[1px] flex h-[18px] shrink-0 border-r border-[#333] bg-linear-to-b from-[#666] to-[#4c4c4c] leading-[18px]">
              <button class="w-[45px] border-r border-[#333] bg-[#656565]">Tips</button>
            </div>
          </div>
        </div>
      </section>
    </aside>
  </main>

  <!-- timeline -->
  <section class="shrink-0">
    <div class="relative flex h-[29px] items-end pr-[1px] pl-[3px] text-[12px]">
      <span class="absolute top-0 left-[936px] h-2 w-12 bg-[#404040] text-center text-[7px] leading-2 text-[#666]">&#9660;&#9650;</span>
      <button class="h-5 w-20 bg-[#484848] leading-[19px] text-[#999] [clip-path:polygon(8px_0,calc(100%_-_8px)_0,100%_100%,0_100%)]">aniMate2</button>
      <button class="ml-[5px] h-5 w-20 bg-[#5f5f5f] leading-[19px] [clip-path:polygon(8px_0,calc(100%_-_8px)_0,100%_100%,0_100%)]">Timeline</button>
      <button aria-label="Pane menu" class="ml-auto flex h-[21px] w-5 items-center justify-center border border-[#484848]"><svg class="size-4"><use href="#pmenu"/></svg></button>
    </div>
    <div class="bg-[#5f5f5f] pt-1 pr-[6px] pl-[3px]">
      <div class="flex h-[49px] border border-[#454545]">
        <div class="w-[251px] bg-[#434343] pt-2 text-center">Name</div>
        <div class="relative flex flex-1 flex-col bg-[#5f5f5f]">
          <div class="mr-[17px] ml-[11px] flex h-[14px] justify-between leading-[14px]">
            <span class="flex w-0 justify-center">0</span><span class="flex w-0 justify-center">5</span><span class="flex w-0 justify-center">10</span><span class="flex w-0 justify-center">15</span><span class="flex w-0 justify-center">20</span><span class="flex w-0 justify-center">25</span><span class="flex w-0 justify-center">30</span>
          </div>
          <div id="ticks" class="mr-[15px] ml-[11px] flex h-[15px] items-end justify-between"></div>
          <div class="mx-[3px] h-[3px] bg-[#464646]"></div>
          <div class="mt-[2px] flex-1 bg-[#565656]"><div class="ml-[11px] h-full w-px bg-white"></div></div>
          <svg class="absolute top-[15px] left-0 h-3 w-6" viewBox="0 0 24 12"><path d="M0 0h23L11.500 12z" fill="#f7c32b"/></svg>
        </div>
      </div>
      <div class="flex h-[6px] justify-center bg-[#525252]"><span class="my-px w-5 border border-[#333] bg-[#555]"></span></div>
      <div class="relative h-[103px] border border-[#454545]">
        <svg class="h-full w-full text-[11px]">
          <rect width="251" height="100%" fill="#434343"/>
          <svg id="frames" x="263" class="w-[calc(100%-279px)] overflow-visible"></svg>
          <path d="M0 33.500h4000M0 66.500h4000" stroke="#454545"/><path d="M0 50.500h4000" stroke="#2b2b2b"/>
          <path d="M263.500 0v103" stroke="#fff"/>
          <text x="267" y="33" fill="#454545">10</text><text x="266" y="76" fill="#454545">-10</text><text x="56.600%" y="90" fill="#2d2d2d">15</text>
        </svg>
        <div class="absolute top-[2px] right-0 flex flex-col gap-px text-[#d2d2d2]">
          <button aria-label="Pan graph" class="flex h-[31px] w-8 items-center justify-center border border-[#454545] bg-linear-to-b from-[#6c6c6c] to-[#525252]"><svg class="size-[22px]"><use href="#pan"/></svg></button>
          <button aria-label="Zoom graph" class="flex h-[31px] w-8 items-center justify-center border border-[#454545] bg-linear-to-b from-[#6c6c6c] to-[#525252]"><svg class="size-[26px]"><use href="#mag"/></svg></button>
          <button aria-label="Frame graph" class="flex h-[31px] w-8 items-center justify-center border border-[#454545] bg-linear-to-b from-[#6c6c6c] to-[#525252]"><svg class="size-5"><use href="#frame"/></svg></button>
        </div>
      </div>
      <div class="flex h-[21px] items-start border border-[#2b2b2b] px-[5px]"><span class="self-end text-[9px] leading-2">&#9660;</span><span class="ml-[6px]">0</span><span class="mr-1 ml-auto">30</span><span class="self-end text-[9px] leading-2">&#9660;</span></div>
      <div class="flex h-7 items-center pr-[32px] pb-[3px] pl-[1px]">
        <div class="flex items-center gap-px">
          <label for="total" class="pr-px">Total:</label><input id="total" value="31" class="h-[21px] w-10 border border-[#4a4a4a] bg-[#6e6e6e] text-center">
          <label for="from" class="pl-px">Range:</label><input id="from" value="0" class="h-[21px] w-10 border border-[#4a4a4a] bg-[#6e6e6e] text-center">
          <input aria-label="Range end" value="30" class="ml-px h-[21px] w-10 border border-[#4a4a4a] bg-[#6e6e6e] text-center">
          <label for="cur-frame" class="pl-px">Current:</label><input id="cur-frame" value="0" class="h-[21px] w-10 border border-[#4a4a4a] bg-[#6e6e6e] text-center">
          <label for="fps" class="pl-px">FPS:</label><input id="fps" value="30" class="h-[21px] w-10 border border-[#4a4a4a] bg-[#6e6e6e] text-center">
        </div>
        <span class="grow-[216]"></span>
        <div class="relative flex items-center gap-[2px]"><label for="types">Types :</label><select id="types" class="h-[21px] w-[76px] appearance-none border border-[#454545] bg-linear-to-b from-[#6c6c6c] to-[#525252] px-[5px]"><option>TRA</option></select><span class="pointer-events-none absolute right-[7px] text-[10px]">&#9660;</span></div>
        <span class="grow-[218]"></span>
        <div class="flex h-[21px] w-[200px] items-center border border-[#454545] bg-linear-to-b from-[#6c6c6c] to-[#525252] pl-[6px] text-[#d2d2d2] *:shrink-0">
          <button aria-label="Loop" class="w-6"><svg class="h-[14px] w-[22px]" viewBox="0 0 22 14"><path d="M3 7c0-3 1-4 4-4h8M19 7c0 3-1 4-4 4H7" fill="none" stroke="currentColor" stroke-width="1.800"/><path d="M14 0l5 3-5 3zM8 8l-5 3 5 3z" fill="currentColor"/></svg></button>
          <button aria-label="First frame" class="w-[21px]"><svg class="h-[10px] w-[14px]" viewBox="0 0 14 10"><path d="M0 0h1.500v10H0zM8 0v10L2 5zM14 0v10L8 5z" fill="currentColor"/></svg></button>
          <button aria-label="Previous key" class="w-[26px]"><svg class="h-3 w-5 rotate-180"><use href="#nextkey"/></svg></button>
          <button aria-label="Previous frame" class="w-[28px]"><svg class="h-[10px] w-2" viewBox="0 0 8 10"><path d="M0 0h1.500v10H0zM8 0v10L2 5z" fill="currentColor"/></svg></button>
          <button aria-label="Play" class="w-[29px]"><svg class="h-[10px] w-2" viewBox="0 0 8 10"><path d="M0 0l8 5-8 5z" fill="currentColor"/></svg></button>
          <button aria-label="Next frame" class="w-[17px]"><svg class="h-[10px] w-2" viewBox="0 0 8 10"><path d="M6.500 0H8v10H6.500zM0 0l6 5-6 5z" fill="currentColor"/></svg></button>
          <button aria-label="Next key" class="w-[25px]"><svg class="h-3 w-5"><use href="#nextkey"/></svg></button>
          <button aria-label="Last frame"><svg class="h-[10px] w-[14px]" viewBox="0 0 14 10"><path d="M12.500 0H14v10h-1.500zM0 0l6 5-6 5zM6 0l6 5-6 5z" fill="currentColor"/></svg></button>
        </div>
        <span class="grow-[143]"></span>
        <div class="relative flex items-center gap-[2px]">
          <span>Keys :</span>
          <span class="flex h-[21px] w-[55px] items-center justify-around border border-[#454545] bg-linear-to-b from-[#666] to-[#525252] text-[#3e3e3e]"><button aria-label="Remove key" class="relative"><svg class="mt-1 h-3 w-5"><use href="#key"/></svg><b class="absolute -top-[6px] right-[3px]">&minus;</b></button><button aria-label="Add key" class="relative"><svg class="mt-1 h-3 w-5"><use href="#key"/></svg><b class="absolute -top-[6px] right-[3px]">+</b></button></span>
          <div class="relative"><select aria-label="Key scope" class="h-[21px] w-[111px] appearance-none border border-[#454545] bg-linear-to-b from-[#6c6c6c] to-[#525252] px-[5px]"><option>Node</option></select><span class="pointer-events-none absolute top-[3px] right-[7px] text-[10px]">&#9660;</span></div>
          <span class="ml-1 flex h-[21px] w-14 items-center justify-center gap-[1px] border border-[#454545] bg-linear-to-b from-[#666] to-[#525252] text-[#3e3e3e]"><button aria-label="Copy key"><svg class="h-[14px] w-[21px]" viewBox="0 0 21 14"><circle cx="4" cy="7" r="3.500" fill="currentColor"/><path d="M7 7h8v3M12 2v-1h5l3 3v9h-8v-2" fill="none" stroke="currentColor" stroke-width="1.500"/></svg></button><button aria-label="Paste key"><svg class="h-[14px] w-[21px]" viewBox="0 0 21 14"><path d="M9 1H2v12h7M9 7h11v2" fill="none" stroke="currentColor" stroke-width="1.500"/><circle cx="9" cy="7" r="3.500" fill="currentColor"/></svg></button></span>
        </div>
        <span class="grow-[177]"></span>
        <div class="flex items-center gap-[2px]">
          <button aria-label="Interpolation" class="mr-1 size-[21px] border border-[#454545] bg-linear-to-b from-[#6c6c6c] to-[#525252]"><svg class="size-[19px]" viewBox="0 0 19 19"><path d="M5 16c3-1 3-7 7-9 3-1 4-2 6-4M5 16l4-6 9-2" fill="none" stroke="#999"/></svg></button>
          <span>TCB:</span>
          <input aria-label="Tension" disabled class="h-[21px] w-[50px] border border-[#4a4a4a] bg-[#434343]"><input aria-label="Continuity" disabled class="h-[21px] w-[50px] border border-[#4a4a4a] bg-[#434343]"><input aria-label="Bias" disabled class="h-[21px] w-[50px] border border-[#4a4a4a] bg-[#434343]">
        </div>
      </div>
    </div>
  </section>

  <!-- status bar -->
  <footer class="flex h-[23px] shrink-0 items-center pr-1 text-[#e0e0e0]">
    <span class="mr-2 ml-[2px] h-5 w-1 border border-[#222] bg-[#484848]"></span>
    <p>Click to adjust the look of the interface.</p>
    <div class="relative ml-auto"><select aria-label="Lesson" class="h-[21px] w-[200px] appearance-none border border-[#3c3c3c] bg-linear-to-b from-[#6c6c6c] to-[#525252] px-[5px]"><option>Select a Lesson...</option></select><span class="pointer-events-none absolute top-[3px] right-[7px] text-[10px]">&#9660;</span></div>
    <div class="flex text-[#3f3f3f] italic *:flex *:h-[21px] *:w-[21px] *:items-center *:justify-center *:border *:border-[#3c3c3c] *:bg-linear-to-b *:from-[#666] *:to-[#505050]">
      <button aria-label="Video"><svg class="size-[18px]"><use href="#clap"/></svg></button><button>1</button><button>2</button><button>3</button><button>4</button><button>5</button><button>6</button><button>7</button><button>8</button><button>9</button>
    </div>
  </footer>
</div>

<script>
  // ground plane in perspective: rows across, columns towards the vanishing point
  const row = n => `M9 ${-134 + 4889 / (n + 4.12)}L1554 ${-134 + 6982 / (n + 4.125)}`;
  const col = k => {
    const m = 4968 / (k + 3.615) / 1490;
    return `M1499 -134L${1499 - 3000 / m} 2866`;
  };
  let d = row(-1);
  for (let n = 1; n <= 20; n++) d += row(n);
  for (let k = -4; k <= 18; k++) if (k !== -2) d += col(k);
  document.getElementById('grid').setAttribute('d', d);
  document.getElementById('axes').setAttribute('d', row(0) + col(-2));

  // ruler ticks, one per frame
  let ticks = '';
  for (let f = 0; f <= 30; f++) ticks += f % 5 ? '<i class="h-[10px] w-[2px] bg-[#454545]"></i>' : '<i class="h-[15px] w-[2px] bg-[#d8d8d8]"></i>';
  document.getElementById('ticks').innerHTML = ticks;

  // graph columns
  let lines = '<rect x="100%" width="20" height="100%" fill="#434343"/>';
  for (let f = -4; f <= 30; f++) {
    const x = f / 30 * 100 + '%';
    lines += `<line x1="${x}" x2="${x}" y2="103" stroke="${f === 15 ? '#2b2b2b' : f < 0 ? '#3c3c3c' : '#505050'}"/>`;
  }
  document.getElementById('frames').innerHTML = lines;
</script>
</body>
</html>
